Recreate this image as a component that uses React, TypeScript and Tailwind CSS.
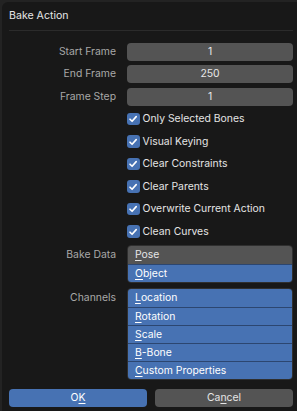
import type { ReactNode } from "react";

const font = { fontFamily: "Inter, 'Noto Sans', sans-serif" };

function Label({ children }: { children?: ReactNode }) {
  return <div className="w-[108px] shrink-0 pr-[1px] text-right text-[#a8a8a8]">{children}</div>;
}

function NumberRow({ label, value }: { label: string; value: string }) {
  return (
    <div className="flex h-[22.5px] items-center gap-[10px]">
      <Label>{label}</Label>
      <div className="flex h-[18px] flex-1 items-center justify-center rounded-[4px] bg-[#545454] text-[#e8e8e8]">
        {value}
      </div>
    </div>
  );
}

function CheckRow({ label }: { label: string }) {
  return (
    <div className="flex h-[22.5px] items-center gap-[10px]">
      <Label />
      <div className="flex flex-1 items-center gap-[3px]">
        <div className="flex h-[12.5px] w-[12.5px] items-center justify-center rounded-[3px] bg-[#4772b3]">
          <svg width="10" height="10" viewBox="0 0 10 10" fill="none">
            <path d="M2 5.2 L4.1 7.3 L8.2 2.6" stroke="#ffffff" strokeWidth="1.6" strokeLinecap="round" strokeLinejoin="round" />
          </svg>
        </div>
        <span className="text-[#e4e4e4]">{label}</span>
      </div>
    </div>
  );
}

function Key({ text, at }: { text: string; at: number }) {
  return (
    <span>
      {text.slice(0, at)}
      <span className="underline decoration-[1px] underline-offset-[2px]">{text[at]}</span>
      {text.slice(at + 1)}
    </span>
  );
}

function EnumBox({ items }: { items: { text: string; at: number; on: boolean }[] }) {
  return (
    <div className="flex flex-1 flex-col overflow-hidden rounded-[4px] border border-[#2f2f2f]">
      {items.map((item, i) => (
        <div
          key={item.text}
          className={
            "flex h-[18px] items-center pl-[7px] " +
            (item.on ? "bg-[#4772b3] text-white" : "bg-[#545454] text-[#e6e6e6]") +
            (i > 0 ? " border-t border-[#2c4670]" : "")
          }
        >
          <Key text={item.text} at={item.at} />
        </div>
      ))}
    </div>
  );
}

export default function App() {
  return (
    <div className="h-[411px] w-[297px] overflow-hidden bg-[#232323] pl-[2px] pt-[2px] text-[10.4px]" style={font}>
      <div className="flex h-[420px] flex-col rounded-tl-[6px] bg-[#181818] pl-[7px] pr-[4px]">
        <div className="flex h-[28px] items-center text-[10.6px] text-[#e6e6e6]">Bake Action</div>
        <div className="h-[1px] bg-[#2b2b2b]" />
        <div className="mt-[9.5px] flex flex-col">
          <NumberRow label="Start Frame" value="1" />
          <NumberRow label="End Frame" value="250" />
          <NumberRow label="Frame Step" value="1" />
          <CheckRow label="Only Selected Bones" />
          <CheckRow label="Visual Keying" />
          <CheckRow label="Clear Constraints" />
          <CheckRow label="Clear Parents" />
          <CheckRow label="Overwrite Current Action" />
          <CheckRow label="Clean Curves" />
        </div>
        <div className="mt-[2px] flex gap-[10px]">
          <div className="w-[108px] shrink-0 pr-[1px] pt-[2px] text-right text-[#a8a8a8]">Bake Data</div>
          <EnumBox
            items={[
              { text: "Pose", at: 0, on: false },
              { text: "Object", at: 0, on: true },
            ]}
          />
        </div>
        <div className="mt-[5px] flex gap-[10px]">
          <div className="w-[108px] shrink-0 pr-[1px] pt-[2px] text-right text-[#a8a8a8]">Channels</div>
          <EnumBox
            items={[
              { text: "Location", at: 0, on: true },
              { text: "Rotation", at: 0, on: true },
              { text: "Scale", at: 0, on: true },
              { text: "B-Bone", at: 0, on: true },
              { text: "Custom Properties", at: 0, on: true },
            ]}
          />
        </div>
        <div className="mt-[9px] flex gap-[8px]">
          <div className="flex h-[18px] flex-1 items-center justify-center rounded-[4px] bg-[#4772b3] text-white">
            <Key text="OK" at={1} />
          </div>
          <div className="flex h-[18px] flex-1 items-center justify-center rounded-[4px] bg-[#545454] text-[#e6e6e6]">
            <Key text="Cancel" at={2} />
          </div>
        </div>
      </div>
    </div>
  );
}
